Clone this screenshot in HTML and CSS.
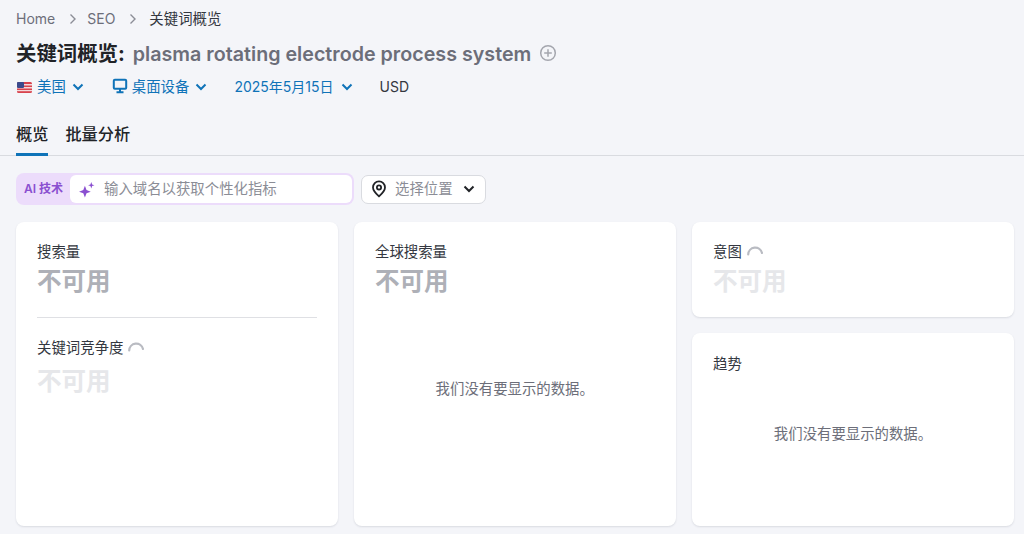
FILE: index.html
```html
<!DOCTYPE html>
<html lang="zh">
<head>
<meta charset="utf-8">
<title>关键词概览</title>
<link rel="stylesheet" href="styles.css">
</head>
<body>
<header class="head">
  <nav class="crumbs">
    <span class="crumb">Home</span>
    <svg class="sep" viewBox="0 0 10 12"><path d="M2.500 1.500 7 6l-4.500 4.500"/></svg>
    <span class="crumb">SEO</span>
    <svg class="sep" viewBox="0 0 10 12"><path d="M2.500 1.500 7 6l-4.500 4.500"/></svg>
    <span class="crumb current">关键词概览</span>
  </nav>
  <h1 class="title">
    <span class="title-main">关键词概览:</span>
    <span class="title-kw">plasma rotating electrode process system</span>
    <svg class="plus" viewBox="0 0 18 18"><circle cx="9" cy="9" r="7.300"/><path d="M9 5.200v7.600M5.200 9h7.600"/></svg>
  </h1>
  <div class="filters">
    <button class="filter f-country">
      <svg class="flag" viewBox="0 0 15 11"><rect width="15" height="11" rx="1.500" fill="#d8434e"/><rect y="2" width="15" height="1.500" fill="#f4d9dc"/><rect y="5" width="15" height="1.500" fill="#f4d9dc"/><rect y="8" width="15" height="1.200" fill="#f4d9dc"/><rect width="7" height="6" rx="1" fill="#3b4a8c"/></svg>
      <span class="cjk">美国</span>
      <svg class="chev" viewBox="0 0 12 8"><path d="M1.500 1.500 6 6l4.500-4.500"/></svg>
    </button>
    <button class="filter f-device">
      <svg class="monitor" viewBox="0 0 16 16"><rect x="1.800" y="1.800" width="12.400" height="8.900" rx="1"/><path d="M8 11v3M4.500 14.200h7"/></svg>
      <span class="cjk">桌面设备</span>
      <svg class="chev" viewBox="0 0 12 8"><path d="M1.500 1.500 6 6l4.500-4.500"/></svg>
    </button>
    <button class="filter f-date">
      <span>2025年5月15日</span>
      <svg class="chev" viewBox="0 0 12 8"><path d="M1.500 1.500 6 6l4.500-4.500"/></svg>
    </button>
    <span class="currency">USD</span>
  </div>
  <div class="tabs">
    <span class="tab active">概览</span>
    <span class="tab">批量分析</span>
  </div>
</header>

<section class="toolbar">
  <div class="ai-box">
    <span class="ai-label">AI 技术</span>
    <div class="ai-input">
      <svg class="spark" viewBox="0 0 16 16"><path d="M6.500 4.500 8 8.500l4 1.500-4 1.500L6.500 15.500 5 11.500 1 10l4-1.500z"/><path d="M12.500 1l.8 2.200 2.200.8-2.200.8-.8 2.200-.8-2.200L9.500 4l2.200-.8z"/></svg>
      <span class="placeholder">输入域名以获取个性化指标</span>
    </div>
  </div>
  <button class="location">
    <svg class="pin" viewBox="0 0 16 18"><path d="M8 16.300C5 13.600 2 10.800 2 7.400a6 6 0 0 1 12 0c0 3.400-3 6.200-6 8.900z"/><circle cx="8" cy="7.400" r="2.100"/></svg>
    <span class="location-text">选择位置</span>
    <svg class="chev dark" viewBox="0 0 12 8"><path d="M1.500 1.500 6 6l4.500-4.500"/></svg>
  </button>
</section>

<main class="grid">
  <article class="card card-a">
    <div class="label">搜索量</div>
    <div class="value">不可用</div>
    <hr class="rule">
    <div class="label">关键词竞争度<svg class="spinner" viewBox="0 0 16 16"><path d="M1.200 10.500A7 7 0 0 1 15 9"/></svg></div>
    <div class="value faint">不可用</div>
  </article>
  <article class="card card-b">
    <div class="label">全球搜索量</div>
    <div class="value">不可用</div>
    <div class="empty">我们没有要显示的数据。</div>
  </article>
  <div class="stack">
    <article class="card card-c">
      <div class="label">意图<svg class="spinner" viewBox="0 0 16 16"><path d="M1.200 10.500A7 7 0 0 1 15 9"/></svg></div>
      <div class="value faint">不可用</div>
    </article>
    <article class="card card-d">
      <div class="label">趋势</div>
      <div class="empty">我们没有要显示的数据。</div>
    </article>
  </div>
</main>
</body>
</html>
```
FILE: styles.css
```css
* { box-sizing: border-box; }
html, body { height: 100%; }
body {
  margin: 0;
  background: #f4f5f9;
  color: #333740;
  font-family: Inter, "Noto Sans CJK SC", sans-serif;
  font-size: 14px;
  line-height: 20px;
  overflow: hidden;
  display: flex;
  flex-direction: column;
}
button { font: inherit; background: none; border: 0; padding: 0; color: inherit; }

.head { border-bottom: 1px solid #d9dbe0; }
.crumbs { display: flex; align-items: center; padding: 9px 16px 0; height: 29px; }
.crumb { color: #6c6e79; }
.crumb.current { color: #333740; font-size: 14.400px; margin-left: 2px; }
.sep { width: 10px; height: 12px; margin: 0 9px 0 13px; fill: none; stroke: #8b8d96; stroke-width: 1.400; }
.title { display: flex; align-items: center; margin: 10px 0 0; padding: 0 16px; height: 30px; line-height: 28px; font-weight: 700; color: #212327; }
.title-main { font-size: 20.400px; }
.title-kw { margin-left: 8px; color: #6c6e79; font-size: 19.700px; font-weight: 600; }
.plus { width: 18px; height: 18px; margin-left: 8px; margin-top: -2px; fill: none; stroke: #a4a6ae; stroke-width: 1.500; }
.filters { display: flex; align-items: center; padding: 0 16px; height: 24px; margin-top: 6px; }
.filter { display: flex; align-items: center; color: #0f73b8; }
.cjk { font-size: 14.400px; }
.f-country { margin-right: 28px; }
.f-device { margin-right: 27px; }
.flag { width: 15px; height: 11px; margin: 0 5px 0 1px; }
.monitor { width: 16px; height: 16px; margin-right: 4px; margin-top: -2px; fill: none; stroke: #0f73b8; stroke-width: 2; }
.chev { width: 12px; height: 8px; margin-left: 6px; fill: none; stroke: #0f73b8; stroke-width: 2; }
.f-date .chev { margin-left: 7px; }
.chev.dark { stroke: #212327; }
.currency { margin-left: 27px; color: #333740; }
.tabs { display: flex; gap: 17px; padding: 0 16px; margin-top: 23px; }
.tab { height: 34px; padding-top: 1px; font-size: 16.200px; line-height: 22px; font-weight: 500; color: #212327; margin-bottom: -1px; }
.tab.active { border-bottom: 3px solid #0f73b8; }

.toolbar { display: flex; align-items: center; gap: 7px; padding: 0 16px; margin-top: 17px; }
.ai-box { display: flex; align-items: center; width: 338px; height: 32px; padding: 2px; border-radius: 8px; background: #ecdcfb; }
.ai-label { width: 52px; padding-left: 6px; font-size: 12px; font-weight: 600; color: #8a4fd0; white-space: nowrap; }
.ai-input { flex: 1; height: 28px; display: flex; align-items: center; padding-left: 8px; background: #fff; border-radius: 6px; }
.spark { width: 17px; height: 17px; fill: #8a4fd0; margin-right: 9px; }
.placeholder { color: #8b8d96; font-size: 14.400px; }
.location { display: flex; align-items: center; width: 125px; height: 29px; padding: 0 10px 0 9px; background: #fff; border: 1px solid #d9dbe0; border-radius: 7px; }
.pin { width: 16px; height: 18px; margin-right: 8px; fill: none; stroke: #212327; stroke-width: 1.800; flex: none; }
.location-text { color: #8b8d96; font-size: 14.400px; }
.location .chev { margin-left: 10px; }

.grid { flex: 1; display: grid; grid-template-columns: 321.500px 321.500px 322px; column-gap: 16.500px; padding: 0 16px; margin: 17px 0 8px; min-height: 0; }
.card { display: flex; flex-direction: column; background: #fff; border-radius: 8px; padding: 20px 21px 0; box-shadow: 0 1px 2px rgba(60, 65, 85, .14); }
.stack { display: flex; flex-direction: column; gap: 16px; min-height: 0; }
.card-c { height: 95px; }
.card-d { flex: 1; padding-top: 21px; }
.label { display: flex; align-items: center; height: 20px; font-size: 14.400px; color: #333740; }
.value { height: 30px; margin-top: 4px; font-size: 24.500px; line-height: 30px; font-weight: 700; color: #aeb0b7; }
.value.faint { color: #e6e7ea; }
.card-a .faint { margin-top: 8px; }
.rule { width: 100%; height: 1px; border: 0; margin: 21px 0 20px; background: #dfe0e4; }
.spinner { width: 16px; height: 16px; margin-left: 5px; fill: none; stroke: #b9bbc2; stroke-width: 2.200; stroke-linecap: round; }
.empty { flex: 1; display: flex; align-items: center; justify-content: center; font-size: 14.400px; color: #6c6e79; }
.card-b .empty { padding-bottom: 45px; }
.card-d .empty { padding-bottom: 32px; }
```
